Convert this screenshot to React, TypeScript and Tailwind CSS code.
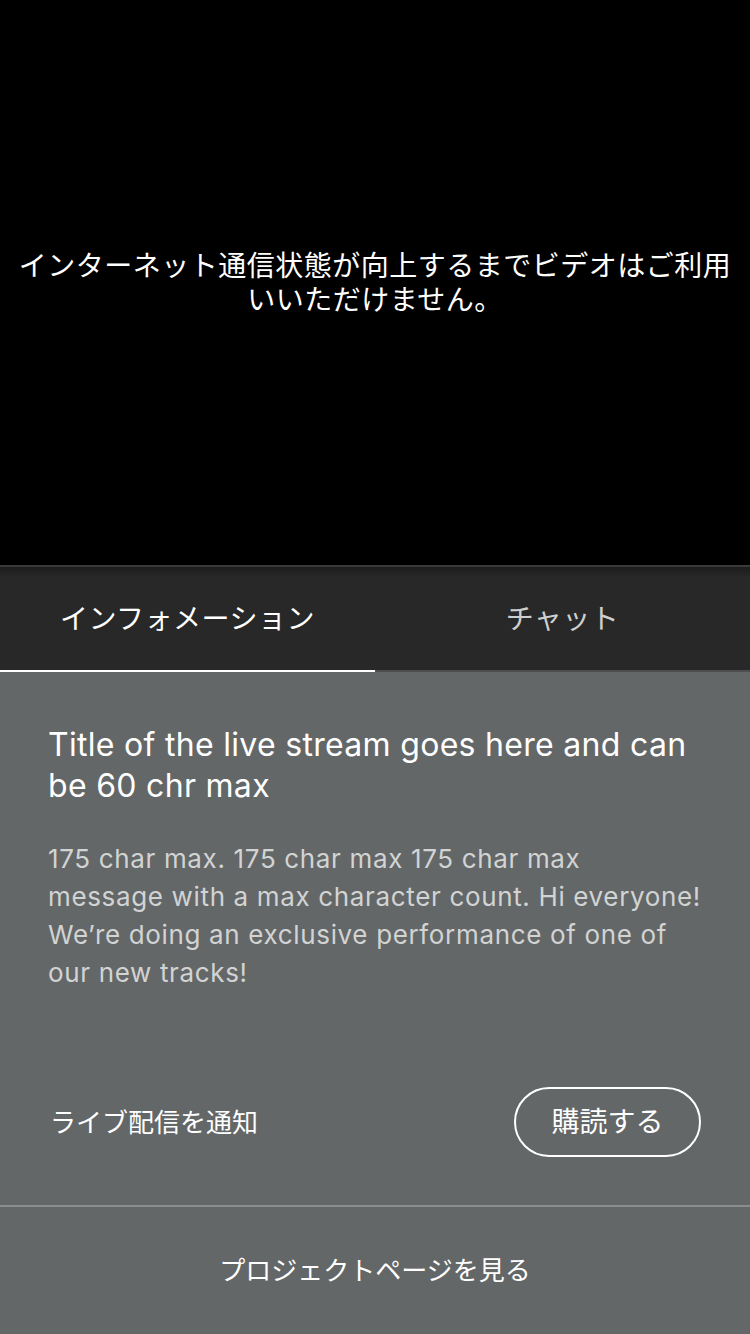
import React from "react";

const font = { fontFamily: 'Inter, "Noto Sans CJK JP", sans-serif' };

export default function App() {
  return (
    <div className="w-[750px] h-[1334px] flex flex-col bg-[#646768] overflow-hidden" style={font}>
      <div className="h-[565px] bg-black flex items-center justify-center px-[18px]">
        <p className="text-white text-[28px] leading-[34px] tracking-[0.5px] text-center">
          インターネット通信状態が向上するまでビデオはご利用いいただけません。
        </p>
      </div>
      <div className="h-[2px] bg-[#3a3a3a]" />
      <div className="h-[103px] flex bg-[linear-gradient(to_bottom,#1c1c1c_0px,#282828_10px,#282828_100%)]">
        <div className="w-[375px] flex items-center justify-center text-white text-[28px] tracking-[0.5px]">インフォメーション</div>
        <div className="flex-1 flex items-center justify-center text-[#cfcfcf] text-[28px] tracking-[0.5px]">チャット</div>
      </div>
      <div className="flex h-[2px]">
        <div className="w-[375px] bg-white" />
        <div className="flex-1 bg-[#4c4e4f]" />
      </div>
      <div className="pl-[48px] pr-[30px] pt-[52px]">
        <h1 className="text-white text-[32px] leading-[41px] font-normal tracking-[0.3px]">
          Title of the live stream goes here and can
          <br />
          be 60 chr max
        </h1>
        <p className="mt-[34px] text-[#d2d3d3] text-[26px] leading-[38px] tracking-[0.65px]">
          175 char max. 175 char max 175 char max
          <br />
          message with a max character count. Hi everyone!
          <br />
          We’re doing an exclusive performance of one of
          <br />
          our new tracks!
        </p>
      </div>
      <div className="mt-[95px] pl-[50px] pr-[49px] flex items-center justify-between">
        <span className="text-white text-[26px]">ライブ配信を通知</span>
        <button className="w-[187px] h-[70px] rounded-full border-2 border-white text-white text-[28px] flex items-center justify-center">
          購読する
        </button>
      </div>
      <div className="mt-[48px] h-[2px] bg-[#8a8c8d]" />
      <div className="flex-1 flex items-center justify-center text-white text-[26px]">プロジェクトページを見る</div>
    </div>
  );
}
